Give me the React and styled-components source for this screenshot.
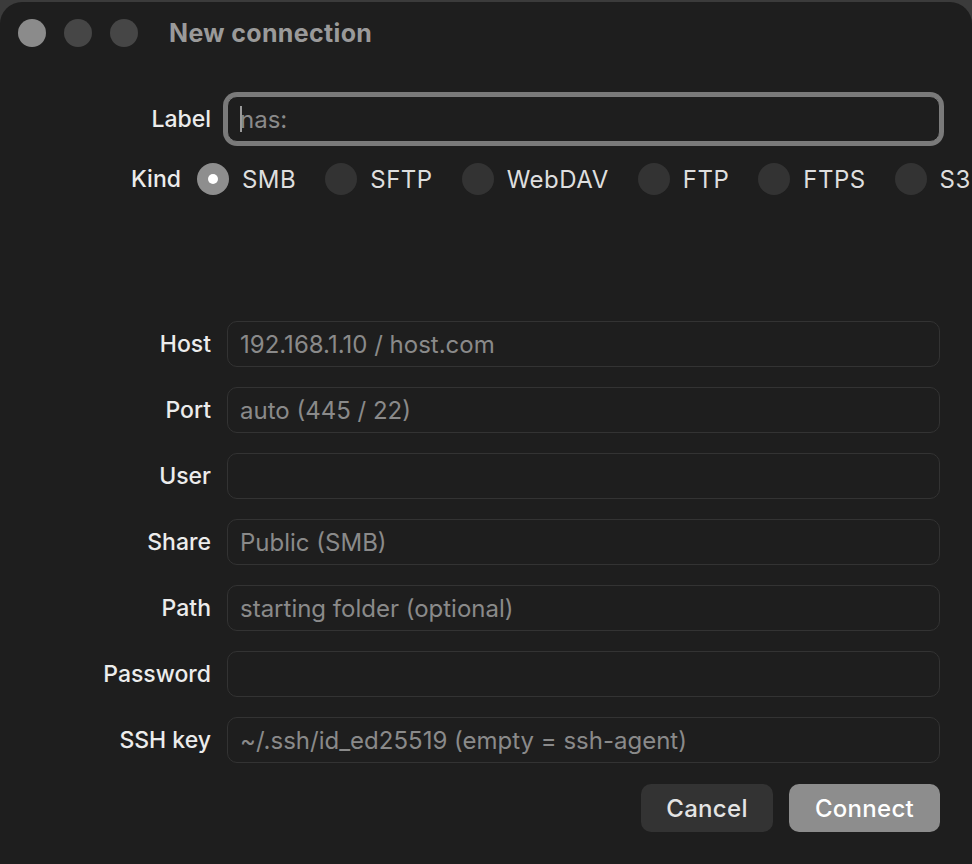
import React from 'react';
import styled, { createGlobalStyle } from 'styled-components';

const GlobalStyle = createGlobalStyle`
  html, body {
    margin: 0;
    padding: 0;
    background: #3b3b3b;
  }
  body {
    font-family: Inter, "Noto Sans", "Liberation Sans", sans-serif;
    -webkit-font-smoothing: antialiased;
  }
`;

const Window = styled.div`
  margin-top: 2px;
  width: 972px;
  height: 862px;
  background: #1e1e1e;
  border-radius: 22px 22px 0 0;
  overflow: hidden;
  box-sizing: border-box;
`;

const TitleBar = styled.div`
  display: flex;
  align-items: center;
  height: 62px;
  padding-left: 18px;
`;

const Light = styled.span`
  width: 28px;
  height: 28px;
  border-radius: 50%;
  background: ${(p) => (p.$active ? '#8b8b8b' : '#464646')};
  margin-right: 18px;
`;

const Title = styled.h1`
  margin: 0 0 0 13px;
  font-size: 25px;
  font-weight: 700;
  color: #9a9a9a;
  letter-spacing: 0.35px;
`;

const Form = styled.div`
  display: grid;
  grid-template-columns: 211px 1fr;
  column-gap: 16px;
  row-gap: 20px;
  padding: 32px 32px 0 0;
`;

const FieldLabel = styled.label`
  justify-self: end;
  align-self: center;
  font-size: 23px;
  font-weight: 500;
  color: #ececec;
`;

const InputWrap = styled.div`
  position: relative;
`;

const Input = styled.input`
  display: block;
  width: 100%;
  height: 46px;
  box-sizing: border-box;
  padding: 0 12px;
  background: #1e1e1e;
  border: 1px solid ${(p) => (p.$focused ? '#7c7c7c' : '#333333')};
  border-radius: 10px;
  box-shadow: ${(p) => (p.$focused ? '0 0 0 4px #7a7a7a' : 'none')};
  font-family: inherit;
  font-size: 24px;
  color: #e6e6e6;
  outline: none;

  &::placeholder {
    color: #8a8a8a;
  }
`;

const Caret = styled.span`
  position: absolute;
  left: 13px;
  top: 10px;
  width: 2px;
  height: 26px;
  background: #9a9a9a;
`;

const KindRow = styled.div`
  display: flex;
  align-items: center;
  height: 34px;
  margin-top: 20px;
  padding-left: 131px;
  white-space: nowrap;
`;

const KindLabel = styled.span`
  font-size: 23px;
  font-weight: 500;
  color: #ececec;
  margin-right: 16px;
`;

const Option = styled.div`
  display: flex;
  align-items: center;
  margin-right: 29px;
  flex-shrink: 0;
`;

const Radio = styled.span`
  width: 32px;
  height: 32px;
  border-radius: 50%;
  background: ${(p) => (p.$checked ? '#8e8e8e' : '#333333')};
  display: flex;
  align-items: center;
  justify-content: center;
  margin-right: 13px;

  &::after {
    content: '';
    display: ${(p) => (p.$checked ? 'block' : 'none')};
    width: 10px;
    height: 10px;
    border-radius: 50%;
    background: #ffffff;
  }
`;

const OptionText = styled.span`
  font-size: 24px;
  letter-spacing: 0.5px;
  color: #dedede;
`;

const Fields = styled(Form)`
  padding-top: 125px;
`;

const Actions = styled.div`
  display: flex;
  justify-content: flex-end;
  gap: 16px;
  padding: 21px 32px 0 0;
`;

const Button = styled.button`
  height: 48px;
  padding: 0 20px;
  min-width: ${(p) => (p.$primary ? '151px' : '132px')};
  border: none;
  border-radius: 10px;
  background: ${(p) => (p.$primary ? '#8d8d8d' : '#333333')};
  color: ${(p) => (p.$primary ? '#ffffff' : '#e4e4e4')};
  font-family: inherit;
  font-size: 24px;
  letter-spacing: 0.3px;
  font-weight: 500;
`;

const kinds = ['SMB', 'SFTP', 'WebDAV', 'FTP', 'FTPS', 'S3'];

const fields = [
  { label: 'Host', placeholder: '192.168.1.10 / host.com' },
  { label: 'Port', placeholder: 'auto (445 / 22)' },
  { label: 'User', placeholder: '' },
  { label: 'Share', placeholder: 'Public (SMB)' },
  { label: 'Path', placeholder: 'starting folder (optional)' },
  { label: 'Password', placeholder: '', type: 'password' },
  { label: 'SSH key', placeholder: '~/.ssh/id_ed25519 (empty = ssh-agent)' },
];

export default function App() {
  return (
    <>
      <GlobalStyle />
      <Window>
        <TitleBar>
          <Light $active />
          <Light />
          <Light />
          <Title>New connection</Title>
        </TitleBar>

        <Form>
          <FieldLabel>Label</FieldLabel>
          <InputWrap>
            <Input $focused placeholder="nas:" readOnly />
            <Caret />
          </InputWrap>
        </Form>

        <KindRow>
          <KindLabel>Kind</KindLabel>
          {kinds.map((k, i) => (
            <Option key={k}>
              <Radio $checked={i === 0} />
              <OptionText>{k}</OptionText>
            </Option>
          ))}
        </KindRow>

        <Fields>
          {fields.map((f) => (
            <React.Fragment key={f.label}>
              <FieldLabel>{f.label}</FieldLabel>
              <Input type={f.type || 'text'} placeholder={f.placeholder} readOnly />
            </React.Fragment>
          ))}
        </Fields>

        <Actions>
          <Button>Cancel</Button>
          <Button $primary>Connect</Button>
        </Actions>
      </Window>
    </>
  );
}
